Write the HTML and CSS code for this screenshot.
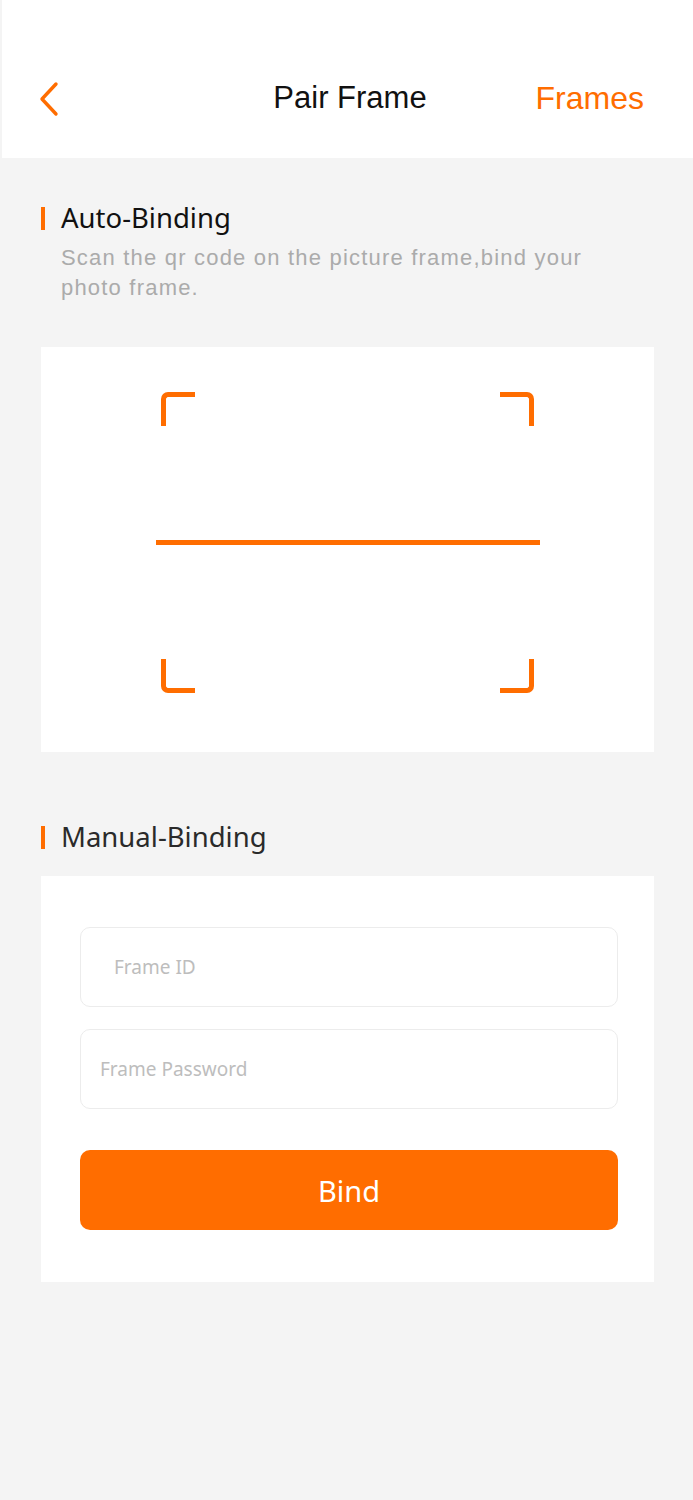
FILE: index.html
```html
<!DOCTYPE html>
<html lang="en">
<head>
<meta charset="utf-8">
<title>Pair Frame</title>
<link rel="stylesheet" href="styles.css">
</head>
<body>
<div class="page">
  <header class="header">
    <div class="header-row">
      <div class="back">
        <svg width="22" height="36" viewBox="0 0 22 36"><polyline points="17,3 3,18 17,33" fill="none" stroke="#ff6d00" stroke-width="3.4" stroke-linecap="round" stroke-linejoin="round"/></svg>
      </div>
      <div class="title">Pair Frame</div>
      <div class="frames">Frames</div>
    </div>
  </header>

  <main class="content">
    <h2 class="section-title">Auto-Binding</h2>
    <p class="desc">Scan the qr code on the picture frame,bind your photo frame.</p>

    <div class="scan-box">
      <div class="scan-frame">
        <div class="corner-row">
          <span class="corner tl"></span>
          <span class="corner tr"></span>
        </div>
        <div class="scan-line"></div>
        <div class="corner-row">
          <span class="corner bl"></span>
          <span class="corner br"></span>
        </div>
      </div>
    </div>

    <h2 class="section-title manual">Manual-Binding</h2>
    <div class="card">
      <input class="field field-id" type="text" placeholder="Frame ID">
      <input class="field field-pw" type="password" placeholder="Frame Password">
      <button class="bind" type="button">Bind</button>
    </div>
  </main>
</div>
</body>
</html>
```

FILE: styles.css
```css
* { box-sizing: border-box; }
html, body { margin: 0; padding: 0; }
body {
  background: #f4f4f4;
  font-family: "Liberation Sans", Arial, sans-serif;
  width: 693px;
  min-height: 1500px;
}
.page { min-height: 1500px; }

.header {
  background: #fff;
  margin-left: 2px;
  height: 158px;
  padding-top: 60px;
}
.header-row {
  height: 76px;
  display: grid;
  grid-template-columns: 1fr auto 1fr;
  align-items: center;
  padding: 0 49px 0 37px;
}
.back { display: flex; align-items: center; }
.back svg { display: block; margin-top: 2px; }
.title {
  font-size: 31px;
  color: #111;
  padding-left: 17px;
}
.frames {
  justify-self: end;
  font-size: 32px;
  color: #ff6d00;
}

.content {
  padding-left: 41px;
  width: 654px;
}

.section-title {
  margin: 45px 0 0 0;
  font-family: "Noto Sans", "Open Sans", sans-serif;
  font-weight: 400;
  font-size: 27.5px;
  line-height: 30px;
  height: 30px;
  color: #111;
  display: flex;
  align-items: center;
  gap: 16px;
}
.section-title::before {
  content: "";
  width: 4px;
  height: 23px;
  background: #ff6d00;
  flex: none;
}
.section-title.manual {
  margin-top: 70px;
  color: #2a2a2a;
}

.desc {
  margin: 10px 0 0 20px;
  font-size: 22px;
  line-height: 30px;
  letter-spacing: 1.2px;
  color: #ababab;
  width: 560px;
}

.scan-box {
  margin-top: 44px;
  background: #fff;
  height: 405px;
  padding-top: 45px;
  display: flex;
  justify-content: center;
}
.scan-frame {
  width: 384px;
  height: 301px;
  display: flex;
  flex-direction: column;
  align-items: center;
}
.corner-row {
  width: 373px;
  height: 34px;
  display: flex;
  justify-content: space-between;
}
.corner {
  width: 34px;
  height: 34px;
  border: 0 solid #ff6d00;
}
.corner.tl { border-top-width: 5px; border-left-width: 5px; border-top-left-radius: 7px; }
.corner.tr { border-top-width: 5px; border-right-width: 5px; border-top-right-radius: 7px; }
.corner.bl { border-bottom-width: 5px; border-left-width: 5px; border-bottom-left-radius: 7px; }
.corner.br { border-bottom-width: 5px; border-right-width: 5px; border-bottom-right-radius: 7px; }
.scan-line {
  width: 384px;
  height: 5px;
  background: #ff6d00;
  margin: 114px 0;
}

.card {
  margin-top: 24px;
  background: #fff;
  padding: 51px 36px 52px 39px;
  display: flex;
  flex-direction: column;
}
.field {
  height: 80px;
  border: 1.5px solid #ececec;
  border-radius: 10px;
  background: #fff;
  font-family: "Noto Sans", "Open Sans", sans-serif;
  font-size: 19px;
  color: #333;
  outline: none;
}
.field::placeholder { color: #bdbdbd; }
.field-id { padding-left: 33px; }
.field-pw { margin-top: 22px; padding-left: 19px; }
.bind {
  margin-top: 41px;
  height: 80px;
  border: 0;
  border-radius: 10px;
  background: #ff6d00;
  color: #fff;
  font-family: "Noto Sans", "Open Sans", sans-serif;
  font-size: 29px;
  font-weight: 400;
  cursor: pointer;
}
```
